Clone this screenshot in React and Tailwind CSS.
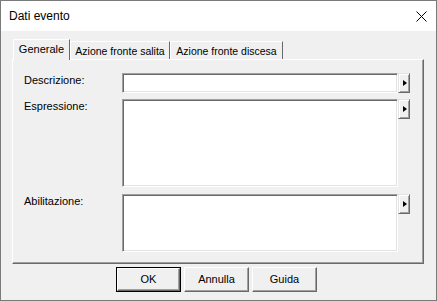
import React from "react"

const font = { fontFamily: '"Liberation Sans", Arial, sans-serif' }

function ArrowButton() {
    return (
        <div className="flex h-[20px] w-[12px] shrink-0 items-center justify-center border border-t-[#e3e3e3] border-l-[#e3e3e3] border-r-[#696969] border-b-[#696969] bg-[#f0f0f0] shadow-[inset_1px_1px_#ffffff,inset_-1px_-1px_#a0a0a0]">
            <div className="ml-[1px] h-0 w-0 border-y-[3.5px] border-l-[4px] border-y-transparent border-l-black" />
        </div>
    )
}

function Field({ label, height }) {
    return (
        <div className="flex items-start">
            <div className="w-[98px] pt-[1px] text-[11px] leading-[13px] text-black">{label}</div>
            <div
                className={`w-[276px] border border-t-[#a0a0a0] border-l-[#a0a0a0] border-r-white border-b-white bg-white shadow-[inset_1px_1px_#696969,inset_-1px_-1px_#e3e3e3] ${height}`}
            />
            <ArrowButton />
        </div>
    )
}

function Tab({ children, selected, width }) {
    if (selected) {
        return (
            <div
                className={`relative z-10 -mb-[1px] flex h-[21px] items-start justify-center border-t border-l border-r border-t-white border-l-white border-r-[#696969] bg-[#f0f0f0] pt-[3px] text-[11px] leading-[13px] ${width}`}
            >
                {children}
            </div>
        )
    }
    return (
        <div
            className={`flex h-[18px] items-start justify-center border-t border-l border-r border-t-white border-l-white border-r-[#696969] bg-[#f0f0f0] pt-[3px] text-[10.5px] leading-[13px] ${width}`}
        >
            {children}
        </div>
    )
}

function DialogButton({ children, primary }) {
    if (primary) {
        return (
            <div className="flex h-[25px] w-[65px] items-center justify-center border border-black">
                <div className="flex h-full w-full items-center justify-center border border-t-white border-l-white border-r-[#696969] border-b-[#696969] bg-[#f0f0f0] text-[11px] shadow-[inset_-1px_-1px_#a0a0a0]">
                    {children}
                </div>
            </div>
        )
    }
    return (
        <div className="flex h-[25px] w-[65px] items-center justify-center border border-t-white border-l-white border-r-[#696969] border-b-[#696969] bg-[#f0f0f0] text-[11px] shadow-[inset_-1px_-1px_#a0a0a0]">
            {children}
        </div>
    )
}

export default function App() {
    return (
        <div style={font} className="flex h-[301px] w-[437px] flex-col border border-[#7a7a7a] bg-[#f0f0f0] text-black">
            {/* title bar */}
            <div className="flex h-[30px] items-center justify-between bg-white pl-[8px] pr-[9px]">
                <span className="text-[12px]">Dati evento</span>
                <svg width="11" height="11" viewBox="0 0 11 11" className="mt-[1px]">
                    <path d="M0.5 0.5 L10.5 10.5 M10.5 0.5 L0.5 10.5" stroke="#000" strokeWidth="1" fill="none" />
                </svg>
            </div>

            <div className="flex flex-col pl-[11px] pt-[8px]">
                <div className="flex items-end pl-[1px]">
                    <Tab selected width="w-[57px]">Generale</Tab>
                    <Tab width="w-[100px]">Azione fronte salita</Tab>
                    <Tab width="w-[113px]">Azione fronte discesa</Tab>
                </div>

                <div className="flex h-[205px] w-[412px] flex-col gap-0 border border-t-white border-l-white border-r-[#696969] border-b-[#696969] pl-[11px] pt-[13px] shadow-[inset_-1px_-1px_#a0a0a0]">
                    <Field label="Descrizione:" height="h-[20px]" />
                    <div className="mt-[6px]">
                        <Field label="Espressione:" height="h-[88px]" />
                    </div>
                    <div className="mt-[7px]">
                        <Field label="Abilitazione:" height="h-[58px]" />
                    </div>
                </div>
            </div>

            <div className="mt-[3px] flex gap-[3px] pl-[115px]">
                <DialogButton primary>OK</DialogButton>
                <DialogButton>Annulla</DialogButton>
                <DialogButton>Guida</DialogButton>
            </div>
        </div>
    )
}
